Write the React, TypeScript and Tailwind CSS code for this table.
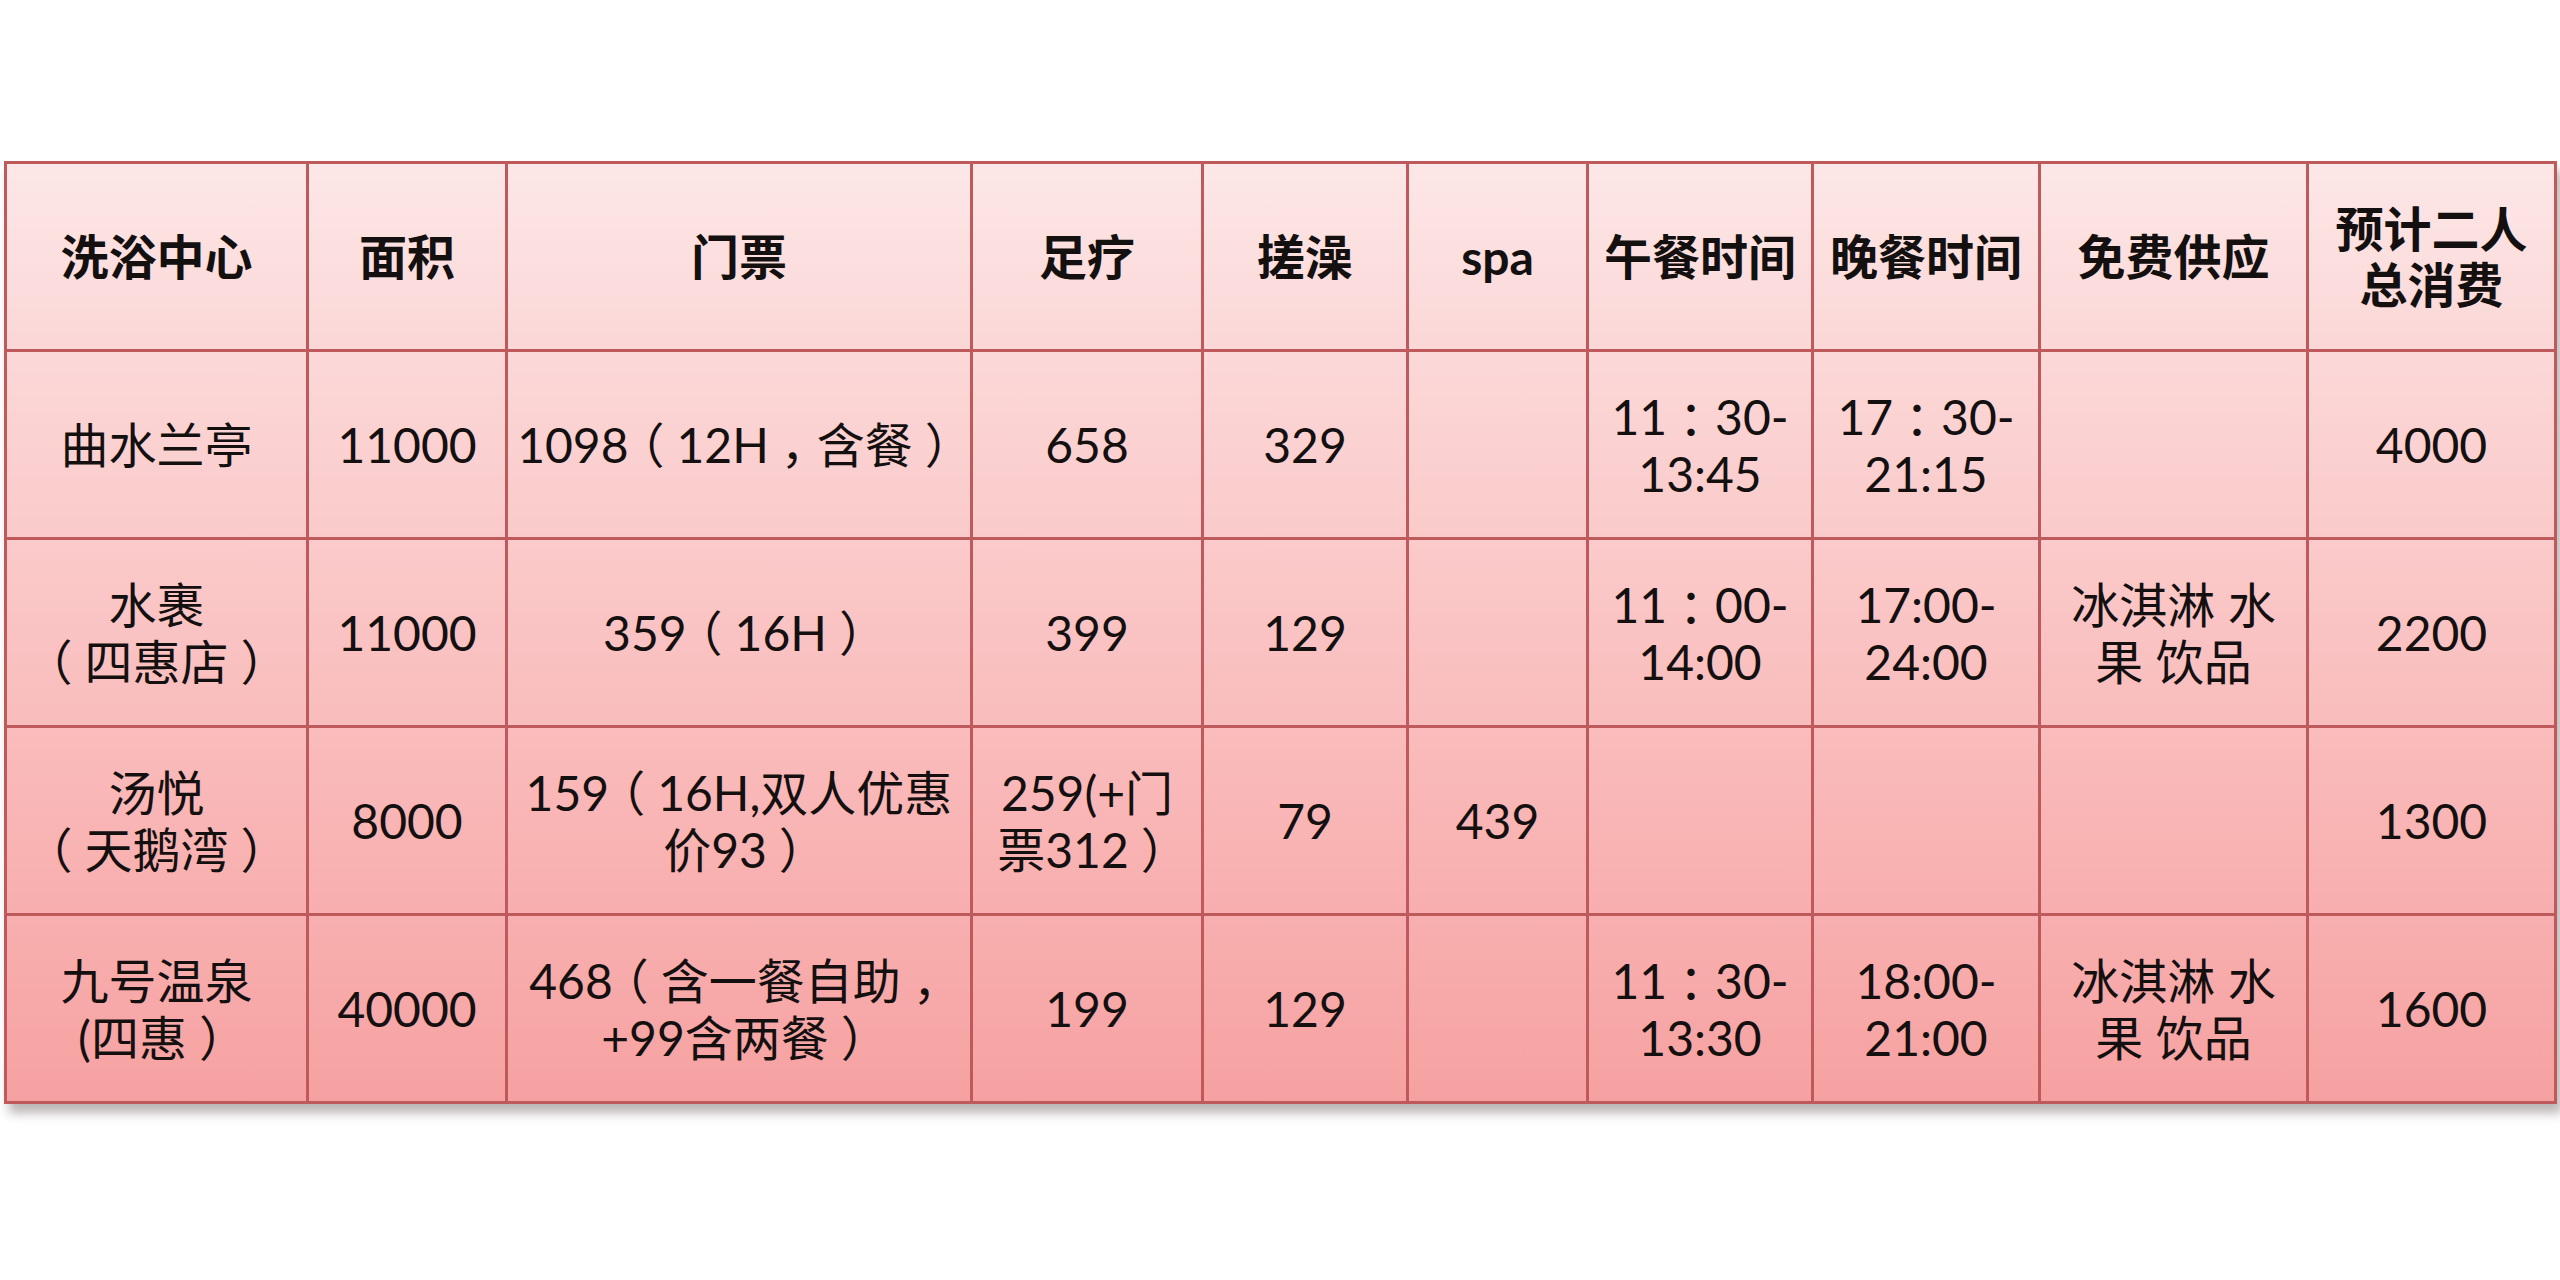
import React from "react";

const cols = [
  "w-[299px]",
  "w-[196px]",
  "w-[462px]",
  "w-[228px]",
  "w-[202px]",
  "w-[177px]",
  "w-[222px]",
  "w-[224px]",
  "w-[265px]",
  "w-[245px]",
];

const rowBg = [
  "bg-gradient-to-b from-[#fde7e7] to-[#fbd7d7]",
  "bg-gradient-to-b from-[#fcd8d8] to-[#facaca]",
  "bg-gradient-to-b from-[#fbcaca] to-[#f9bcbc]",
  "bg-gradient-to-b from-[#fabcbc] to-[#f8aeae]",
  "bg-gradient-to-b from-[#f8afaf] to-[#f6a1a1]",
];

// full-width punctuation sits centred in its box in the source, like Office fonts do
function T({ s }: { s: string }) {
  const parts = s.split(/([（），：])/);
  return (
    <>
      {parts.map((p, i) =>
        /^[（），：]$/.test(p) ? (
          <span key={i} className="inline-block w-[48px] text-center [font-feature-settings:'halt']">
            {p}
          </span>
        ) : (
          <React.Fragment key={i}>{p}</React.Fragment>
        )
      )}
    </>
  );
}

const header: React.ReactNode[] = [
  "洗浴中心",
  "面积",
  "门票",
  "足疗",
  "搓澡",
  "spa",
  "午餐时间",
  "晚餐时间",
  "免费供应",
  <>
    预计二人
    <br />
    总消费
  </>,
];

const rows: React.ReactNode[][] = [
  ["曲水兰亭", "11000", <T s="1098（12H，含餐）" />, "658", "329", "", <><T s="11：30-" /><br />13:45</>, <><T s="17：30-" /><br />21:15</>, "", "4000"],
  [<>水裹<br /><T s="（四惠店）" /></>, "11000", <T s="359（16H）" />, "399", "129", "", <><T s="11：00-" /><br />14:00</>, <>17:00-<br />24:00</>, <>冰淇淋 水<br />果 饮品</>, "2200"],
  [<>汤悦<br /><T s="（天鹅湾）" /></>, "8000", <><T s="159（16H,双人优惠" /><br /><T s="价93）" /></>, <>259(+门<br /><T s="票312）" /></>, "79", "439", "", "", "", "1300"],
  [<>九号温泉<br /><T s="(四惠）" /></>, "40000", <><T s="468（含一餐自助，" /><br /><T s="+99含两餐）" /></>, "199", "129", "", <><T s="11：30-" /><br />13:30</>, <>18:00-<br />21:00</>, <>冰淇淋 水<br />果 饮品</>, "1600"],
];

function Row({ cells, bg, bold }: { cells: React.ReactNode[]; bg: string; bold?: boolean }) {
  return (
    <div className="flex gap-[3px]">
      {cells.map((c, i) => (
        <div
          key={i}
          className={`${cols[i]} ${bg} h-[185px] flex items-center justify-center text-center whitespace-nowrap ${
            bold ? "font-bold leading-[56px]" : "font-normal leading-[57px]"
          }`}
        >
          <div>{c}</div>
        </div>
      ))}
    </div>
  );
}

export default function App() {
  return (
    <div className="w-[2560px] h-[1280px] bg-white pt-[161px] pl-[4px]">
      <div
        className="inline-flex flex-col gap-[3px] p-[3px] bg-[#bf5a5c] text-[48px] text-[#141010] shadow-[5px_9px_10px_rgba(60,40,40,0.35)]"
        style={{ fontFamily: 'Lato, "Noto Sans CJK SC", sans-serif' }}
      >
        <Row cells={header} bg={rowBg[0]} bold />
        {rows.map((r, i) => (
          <Row key={i} cells={r} bg={rowBg[i + 1]} />
        ))}
      </div>
    </div>
  );
}
